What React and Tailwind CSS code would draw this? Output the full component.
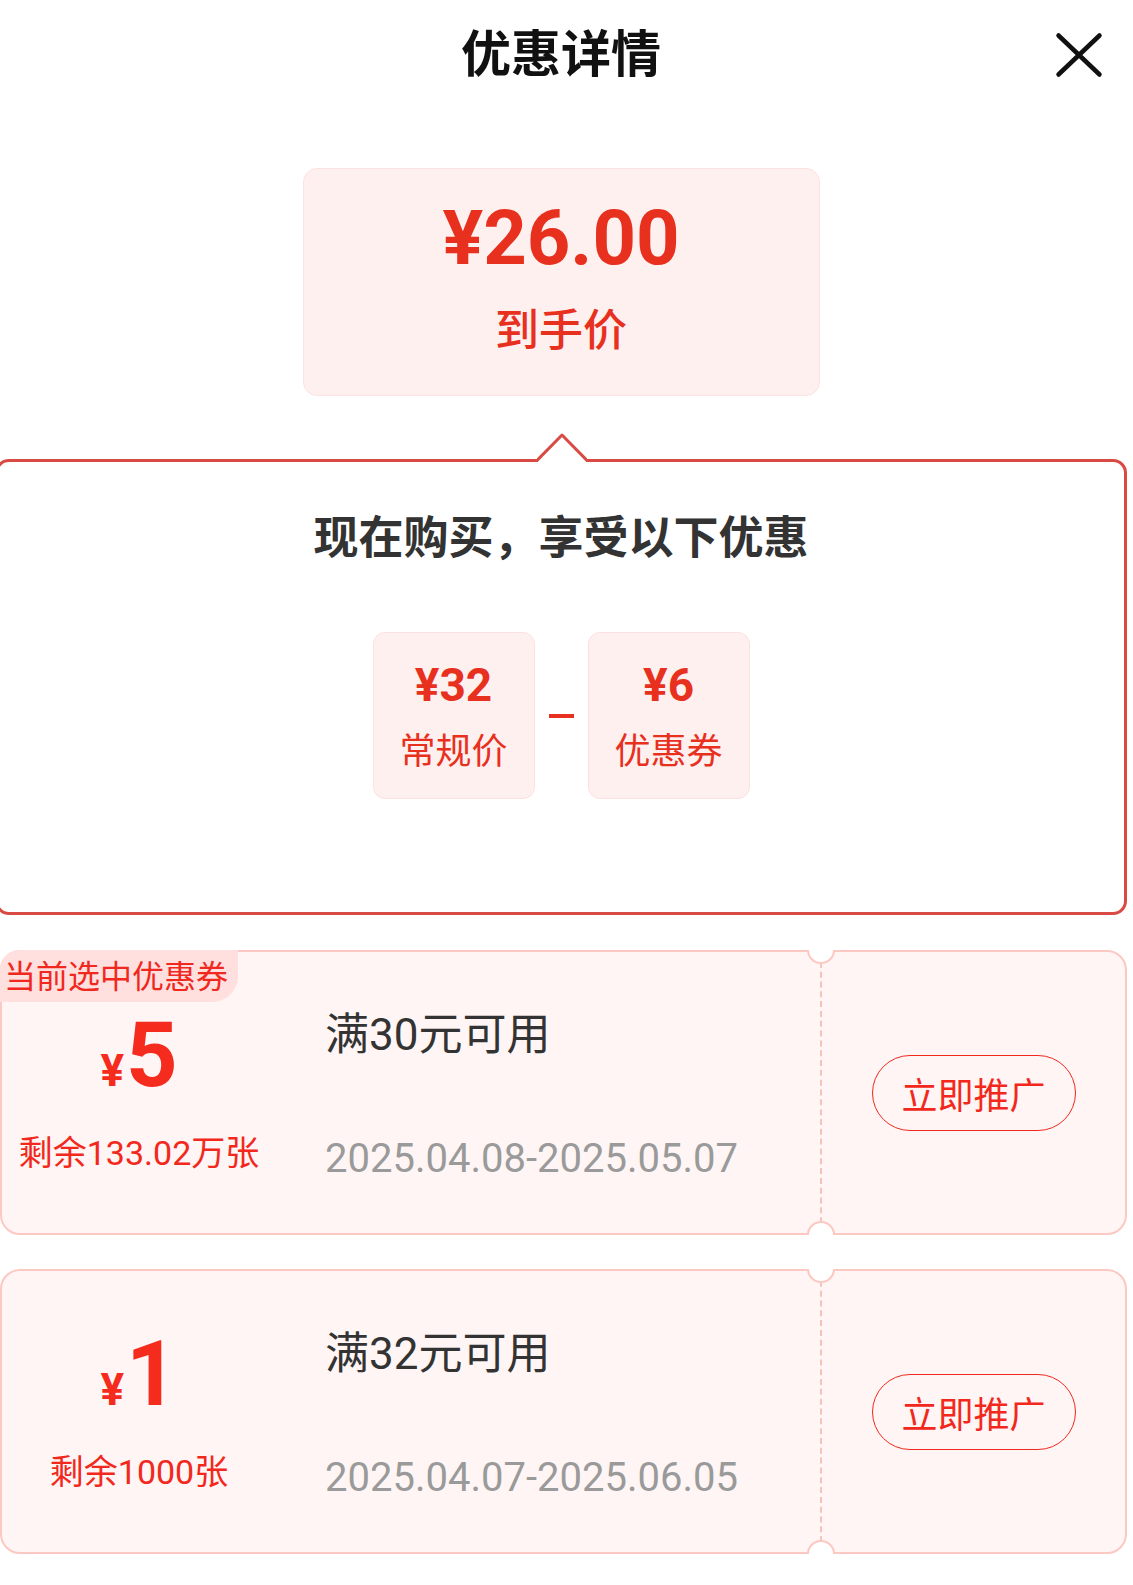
import React from "react";

function Coupon({ badge, amount, remain, title, date }) {
  return (
    <div className="relative flex h-[285px] rounded-[20px] border-2 border-[#fcc8c2] bg-[#fff5f4]">
      {badge && (
        <div className="absolute -left-[2px] -top-[2px] flex h-[52px] w-[238px] items-center rounded-tl-[20px] rounded-br-[26px] bg-[#ffe0df] pb-[4px] pl-[4px] text-[32px] leading-none text-[#f0281e]">
          当前选中优惠券
        </div>
      )}
      <div className="flex w-[274px] flex-col items-center pt-[59px]">
        <div className="flex items-baseline font-['Roboto',sans-serif] font-bold text-[#f52b1e]">
          <span className="mr-[2px] text-[44px] leading-none">¥</span>
          <span className="text-[90px] leading-[90px]">{amount}</span>
        </div>
        <div className="mt-[35px] font-['Roboto','Noto_Sans_CJK_SC',sans-serif] text-[34px] leading-[34px] text-[#f2281c]">{remain}</div>
      </div>
      <div className="flex flex-1 flex-col pl-[49px] pt-[61px] font-['Roboto','Noto_Sans_CJK_SC',sans-serif]">
        <div className="text-[44px] leading-[44px] text-[#333]">{title}</div>
        <div className="mt-[82px] text-[40px] leading-[40px] text-[#9a9a9a]">{date}</div>
      </div>
      <div className="flex w-[305px] items-center justify-center border-l-2 border-dashed border-[#f5c2bc]">
        <div className="flex h-[76px] w-[204px] items-center justify-center rounded-full border-[1.5px] border-[#f2281c] text-[36px] leading-none text-[#f2281c]">
          立即推广
        </div>
      </div>
      <div className="absolute -top-[2px] left-[804px] h-[16px] w-[30px] overflow-hidden">
        <div className="absolute -top-[14px] left-[1px] h-[28px] w-[28px] rounded-full border-2 border-[#fcc8c2] bg-white" />
      </div>
      <div className="absolute -bottom-[2px] left-[804px] h-[16px] w-[30px] overflow-hidden">
        <div className="absolute -bottom-[14px] left-[1px] h-[28px] w-[28px] rounded-full border-2 border-[#fcc8c2] bg-white" />
      </div>
    </div>
  );
}

function PriceBox({ price, label }) {
  return (
    <div className="flex h-[167px] w-[162px] flex-col items-center rounded-[12px] border border-[#fde0e0] bg-[#fff0f0] pt-[29px]">
      <div className="font-['Roboto',sans-serif] text-[46px] font-bold leading-[46px] text-[#e8301e]">{price}</div>
      <div className="mt-[22px] text-[36px] leading-[36px] text-[#e8301e]">{label}</div>
    </div>
  );
}

export default function App() {
  return (
    <div className="h-[1585px] w-[1133px] overflow-hidden bg-white font-['Noto_Sans_CJK_SC',sans-serif]">
      <div className="relative w-[1122px] pt-[25px]">
        <h1 className="text-center text-[50px] font-bold leading-[50px] text-[#111]">优惠详情</h1>
        <svg className="absolute left-[1054px] top-[31px]" width="50" height="48" viewBox="0 0 50 48">
          <path d="M4.5 4.5 L45.5 43.5 M45.5 4.5 L4.5 43.5" stroke="#111" strokeWidth="4.5" strokeLinecap="round" fill="none" />
        </svg>
      </div>

      <div className="mt-[93px] flex w-[1122px] justify-center">
        <div className="flex h-[228px] w-[517px] flex-col items-center rounded-[14px] border border-[#fde2e2] bg-[#fff0f0] pt-[31px]">
          <div className="font-['Roboto',sans-serif] text-[76px] font-bold leading-[76px] text-[#e8301e]">¥26.00</div>
          <div className="mt-[29px] text-[44px] font-medium leading-[44px] text-[#e8301e]">到手价</div>
        </div>
      </div>

      <div className="relative -ml-[5px] mt-[63px] flex h-[456px] w-[1132px] flex-col items-center rounded-[14px] border-[3px] border-[#d84a43] pt-[50px]">
        <svg className="absolute -top-[29px] left-[539px]" width="50" height="31" viewBox="0 0 50 31">
          <polygon points="1,31 1,27.5 25,2 49,27.5 49,31" fill="#fff" />
          <path d="M0 27.5 L25 2 L50 27.5" stroke="#d84a43" strokeWidth="3" strokeLinejoin="round" fill="none" />
        </svg>
        <div className="text-[45px] font-bold leading-[45px] text-[#333]">现在购买，享受以下优惠</div>
        <div className="mt-[75px] flex items-center gap-[14px]">
          <PriceBox price="¥32" label="常规价" />
          <div className="h-[4px] w-[25px] bg-[#e8301e]" />
          <PriceBox price="¥6" label="优惠券" />
        </div>
      </div>

      <div className="mt-[35px] flex w-[1127px] flex-col gap-[34px]">
        <Coupon badge amount="5" remain="剩余133.02万张" title="满30元可用" date="2025.04.08-2025.05.07" />
        <Coupon amount="1" remain="剩余1000张" title="满32元可用" date="2025.04.07-2025.06.05" />
      </div>
    </div>
  );
}
